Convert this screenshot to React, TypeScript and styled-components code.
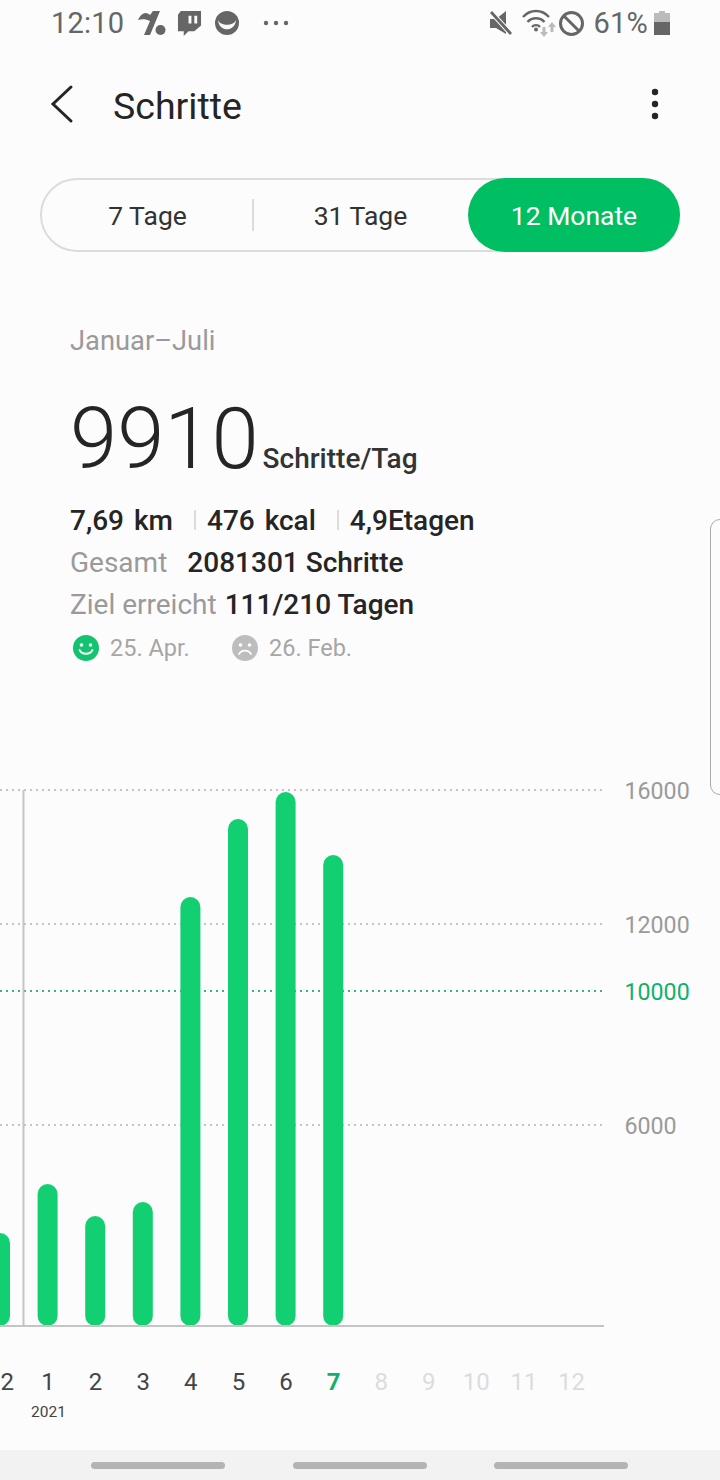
import styled, { createGlobalStyle } from 'styled-components';

const GlobalStyle = createGlobalStyle`
  html, body {
    margin: 0;
    padding: 0;
    background: #fcfcfc;
  }
  body {
    font-family: Roboto, "Liberation Sans", sans-serif;
  }
`;

const Screen = styled.div`
  position: relative;
  width: 720px;
  height: 1480px;
  overflow: hidden;
  display: flex;
  flex-direction: column;
  background: #fcfcfc;
  color: #252525;
`;

const StatusBar = styled.div`
  height: 46px;
  padding: 0 50px 0 51px;
  display: flex;
  align-items: center;
  justify-content: space-between;
  color: #666;
`;

const StatusGroup = styled.div`
  display: flex;
  align-items: center;
`;

const StatusText = styled.span<{ $left?: number }>`
  font-size: 29px;
  letter-spacing: 0.2px;
  margin-left: ${(p) => p.$left ?? 0}px;
`;

const Glyph = styled.svg<{ $left?: number }>`
  display: block;
  flex: none;
  margin-left: ${(p) => p.$left ?? 0}px;
`;

const TitleBar = styled.div`
  height: 116px;
  padding: 0 61px 0 50px;
  display: flex;
  align-items: center;
  gap: 38px;
`;

const Title = styled.h1`
  flex: 1;
  margin: 0;
  padding-top: 3px;
  font-size: 37.5px;
  font-weight: 400;
`;

const Segments = styled.div`
  margin: 16px 40px 0;
  height: 74px;
  box-sizing: border-box;
  border: 2px solid #dcdcdc;
  border-radius: 37px;
  display: flex;
  align-items: center;
`;

const Segment = styled.div<{ $width: number; $active?: boolean; $divided?: boolean }>`
  flex: 0 0 ${(p) => p.$width}px;
  height: 74px;
  box-sizing: border-box;
  display: flex;
  align-items: center;
  justify-content: center;
  font-size: 26.5px;
  border-radius: 37px;
  position: relative;
  color: ${(p) => (p.$active ? '#fff' : '#333')};
  background: ${(p) => (p.$active ? '#00bf63' : 'transparent')};
  ${(p) =>
    p.$divided &&
    `
    &::after {
      content: '';
      position: absolute;
      right: -1px;
      top: 21px;
      height: 32px;
      width: 2px;
      background: #dcdcdc;
    }
  `}
`;

const Summary = styled.section`
  padding: 73px 0 0 70px;
  display: flex;
  flex-direction: column;
`;

const Period = styled.div`
  font-size: 27.3px;
  color: #9a9a9a;
  line-height: 32px;
`;

const Headline = styled.div`
  margin: 30px 0 8px;
  display: flex;
  align-items: baseline;
  gap: 4px;
`;

const BigNumber = styled.span`
  font-size: 85px;
  line-height: 104px;
  font-weight: 300;
  color: #252525;
`;

const Unit = styled.span`
  font-size: 28px;
  font-weight: 500;
  color: #333;
`;

const Row = styled.div`
  display: flex;
  align-items: center;
  height: 42px;
  font-size: 28px;
  white-space: nowrap;
`;

const Stat = styled.span<{ $left?: number }>`
  font-weight: 500;
  color: #252525;
  margin-left: ${(p) => p.$left ?? 0}px;
`;

const Metric = styled(Stat)`
  word-spacing: 3px;
`;

const StatDivider = styled.span`
  width: 2px;
  height: 20px;
  margin: 0 11px 0 21px;
  background: #dcdcdc;
`;

const Muted = styled.span`
  color: #9a9a9a;
`;

const Moods = styled.div`
  margin-top: 3px;
  display: flex;
  align-items: center;
  height: 40px;
  font-size: 23.5px;
  color: #a6a6a6;
`;

const Mood = styled.div`
  display: flex;
  align-items: center;
  gap: 11px;
  width: 159px;
  padding-left: 3px;
  box-sizing: border-box;
`;

const Chart = styled.div`
  margin-top: 102px;
  height: 570px;
`;

const Months = styled.div`
  margin: 28px 0 0 -23.4px;
  display: flex;
`;

const Month = styled.div<{ $tone: 'past' | 'now' | 'future' }>`
  flex: 0 0 47.6px;
  text-align: center;
  font-size: 24px;
  line-height: 28px;
  font-weight: ${(p) => (p.$tone === 'now' ? 700 : 400)};
  color: ${(p) =>
    p.$tone === 'now' ? '#12b06a' : p.$tone === 'future' ? '#dcdcdc' : '#444'};
`;

const Year = styled.div`
  margin: 7px 0 0 31px;
  font-size: 15.5px;
  line-height: 18px;
  color: #444;
`;

const NavBar = styled.div`
  margin-top: auto;
  height: 30px;
  background: #f2f2f2;
  padding: 0 92px 0 91px;
  display: flex;
  align-items: center;
  justify-content: space-between;
`;

const NavPill = styled.div`
  width: 134px;
  height: 7px;
  border-radius: 4px;
  background: #b4b4b4;
`;

const EdgeHandle = styled.div`
  position: absolute;
  top: 519px;
  left: 710px;
  width: 20px;
  height: 276px;
  box-sizing: border-box;
  border: 1.5px solid #aaa;
  border-radius: 12px;
`;

const AxisLabel = styled.text<{ $goal?: boolean }>`
  font-family: Roboto, "Liberation Sans", sans-serif;
  font-size: 23.2px;
  fill: ${(p) => (p.$goal ? '#12b06a' : '#9a9a9a')};
`;

const gridLines = [
  { y: 790, label: '16000' },
  { y: 924, label: '12000' },
  { y: 991, label: '10000', goal: true },
  { y: 1125, label: '6000' },
];

const bars = [
  { x: 0, top: 1233 },
  { x: 47.6, top: 1184 },
  { x: 95.2, top: 1216 },
  { x: 142.8, top: 1202 },
  { x: 190.4, top: 897 },
  { x: 238, top: 819 },
  { x: 285.6, top: 792 },
  { x: 333.2, top: 855 },
];

const months = [12, 1, 2, 3, 4, 5, 6, 7, 8, 9, 10, 11, 12];

const CHART_TOP = 770;

function StepsChart() {
  return (
    <svg width="720" height="570" viewBox={`0 ${CHART_TOP} 720 570`}>
      {gridLines.map((line) => (
        <g key={line.label}>
          <line
            x1="0"
            x2="604"
            y1={line.y}
            y2={line.y}
            stroke={line.goal ? '#3cb384' : '#c4c4c4'}
            strokeWidth="2"
            strokeDasharray="2 4"
          />
          <AxisLabel x="624.5" y={line.y + 9} $goal={line.goal}>
            {line.label}
          </AxisLabel>
        </g>
      ))}
      <line x1="23.5" x2="23.5" y1="790" y2="1326" stroke="#c4c4c4" strokeWidth="2" />
      {bars.map((bar) => (
        <rect
          key={bar.x}
          x={bar.x - 10}
          y={bar.top}
          width="20"
          height={1326 - bar.top}
          rx="10"
          fill="#12d071"
        />
      ))}
      <line x1="0" x2="604" y1="1326" y2="1326" stroke="#c4c4c4" strokeWidth="2" />
    </svg>
  );
}

function App() {
  return (
    <Screen>
      <GlobalStyle />
      <StatusBar>
        <StatusGroup>
          <StatusText>12:10</StatusText>
          <Glyph $left={14} width="28" height="26" viewBox="0 0 28 26" fill="#666">
            <path d="M0 10 C3 3 8 1 12 5 L15 1 H22 L12 25 H6 L12 11 C8 9 4 9 0 10Z" />
            <circle cx="22.5" cy="20" r="5" />
          </Glyph>
          <Glyph $left={11} width="25" height="27" viewBox="0 0 26 28" fill="#666">
            <path d="M4 1 H25 V16 L18 22 H12 L7 27 V22 H1 V5Z M12 6 V14 H15 V6Z M18 6 V14 H21 V6Z" fillRule="evenodd" />
          </Glyph>
          <Glyph $left={13} width="24" height="24" viewBox="0 0 24 24">
            <circle cx="12" cy="12" r="12" fill="#666" />
            <path d="M3 9 C4 21.4 20 21.4 21 9 C19 15.3 5 15.3 3 9Z" fill="#fcfcfc" />
          </Glyph>
          <Glyph $left={24} width="26" height="6" viewBox="0 0 26 6" fill="#666">
            <circle cx="3" cy="3" r="2.2" />
            <circle cx="13" cy="3" r="2.2" />
            <circle cx="23" cy="3" r="2.2" />
          </Glyph>
        </StatusGroup>
        <StatusGroup>
          <Glyph width="22" height="24" viewBox="0 0 22 24" fill="#666">
            <path d="M0 8 H6 L16 0 V23 L6 17 H0Z" />
            <path d="M1 1 L21 23" stroke="#fcfcfc" strokeWidth="5" />
            <path d="M1 1 L21 23" stroke="#666" strokeWidth="2.8" />
          </Glyph>
          <Glyph $left={10} width="34" height="28" viewBox="0 0 34 28" fill="none">
            <path d="M1 8 C8 0 20 0 27 8" stroke="#666" strokeWidth="2.4" />
            <path d="M5.5 13 C10 8 18 8 22.5 13" stroke="#666" strokeWidth="2.4" />
            <path d="M10 18 C12 15.5 16 15.5 18 18" stroke="#666" strokeWidth="2.4" />
            <circle cx="14" cy="20.5" r="2" fill="#666" />
            <path d="M20.5 18 H23.5 V23 H26 L22 28 L18 23 H20.5Z" fill="#bbb" />
            <path d="M30 13 L34 18 H31.5 V23 H28.5 V18 H26Z" fill="#bbb" />
          </Glyph>
          <Glyph $left={3} width="25" height="25" viewBox="0 0 25 25" fill="none" stroke="#666" strokeWidth="3">
            <circle cx="12.5" cy="12.5" r="11" />
            <path d="M4.7 4.7 L20.3 20.3" />
          </Glyph>
          <StatusText $left={10}>61%</StatusText>
          <Glyph $left={6} width="16" height="24" viewBox="0 0 16 24">
            <path d="M5 0 H11 V2 H16 V11 H0 V2 H5Z" fill="#bbb" />
            <rect x="0" y="11" width="16" height="13" fill="#666" />
          </Glyph>
        </StatusGroup>
      </StatusBar>

      <TitleBar>
        <svg width="25" height="40" viewBox="0 0 25 40" fill="none" stroke="#252525" strokeWidth="3" strokeLinecap="round">
          <path d="M21 3 L3 20 L21 37" />
        </svg>
        <Title>Schritte</Title>
        <svg width="8" height="32" viewBox="0 0 8 32" fill="#252525">
          <circle cx="4" cy="4" r="3.2" />
          <circle cx="4" cy="16" r="3.2" />
          <circle cx="4" cy="28" r="3.2" />
        </svg>
      </TitleBar>

      <Segments>
        <Segment $width={211} $divided>7 Tage</Segment>
        <Segment $width={215}>31 Tage</Segment>
        <Segment $width={212} $active>12 Monate</Segment>
      </Segments>

      <Summary>
        <Period>Januar–Juli</Period>
        <Headline>
          <BigNumber>9910</BigNumber>
          <Unit>Schritte/Tag</Unit>
        </Headline>
        <Row>
          <Metric>7,69 km</Metric>
          <StatDivider />
          <Metric>476 kcal</Metric>
          <StatDivider />
          <Metric>4,9Etagen</Metric>
        </Row>
        <Row>
          <Muted>Gesamt</Muted>
          <Stat $left={20}>2081301 Schritte</Stat>
        </Row>
        <Row>
          <Muted>Ziel erreicht</Muted>
          <Stat $left={8}>111/210 Tagen</Stat>
        </Row>
        <Moods>
          <Mood>
            <svg width="26" height="26" viewBox="0 0 26 26">
              <circle cx="13" cy="13" r="13" fill="#12c46f" />
              <circle cx="8.5" cy="10" r="1.8" fill="#fff" />
              <circle cx="17.5" cy="10" r="1.8" fill="#fff" />
              <path d="M6.5 15 C9 20 17 20 19.5 15" stroke="#fff" strokeWidth="1.8" fill="none" strokeLinecap="round" />
            </svg>
            25. Apr.
          </Mood>
          <Mood>
            <svg width="26" height="26" viewBox="0 0 26 26">
              <circle cx="13" cy="13" r="13" fill="#bdbdbd" />
              <circle cx="8.5" cy="10" r="1.8" fill="#fff" />
              <circle cx="17.5" cy="10" r="1.8" fill="#fff" />
              <path d="M7 19 C9.5 14.5 16.5 14.5 19 19" stroke="#fff" strokeWidth="1.8" fill="none" strokeLinecap="round" />
            </svg>
            26. Feb.
          </Mood>
        </Moods>
      </Summary>

      <Chart>
        <StepsChart />
      </Chart>

      <Months>
        {months.map((month, i) => (
          <Month key={i} $tone={i === 7 ? 'now' : i > 7 ? 'future' : 'past'}>
            {month}
          </Month>
        ))}
      </Months>
      <Year>2021</Year>

      <NavBar>
        <NavPill />
        <NavPill />
        <NavPill />
      </NavBar>
      <EdgeHandle />
    </Screen>
  );
}

export default App;
